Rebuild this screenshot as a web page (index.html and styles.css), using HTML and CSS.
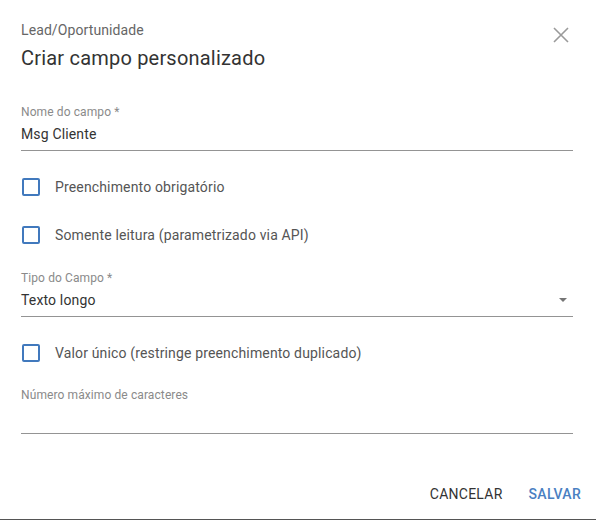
FILE: index.html
```html
<!DOCTYPE html>
<html lang="pt">
<head>
<meta charset="utf-8">
<link rel="stylesheet" href="styles.css">
</head>
<body>
<div class="dialog">
  <header class="head">
    <div class="titles">
      <div class="subtitle">Lead/Oportunidade</div>
      <h1 class="title">Criar campo personalizado</h1>
    </div>
    <button class="close" aria-label="Fechar">
      <svg width="16" height="16" viewBox="0 0 16 16"><path d="M1 1L15 15M15 1L1 15" stroke="#9a9a9a" stroke-width="1.6" fill="none"/></svg>
    </button>
  </header>

  <div class="body">
    <div class="field first">
      <div class="label">Nome do campo *</div>
      <div class="input">Msg Cliente</div>
    </div>

    <label class="check"><span class="box"></span><span class="ctext">Preenchimento obrigatório</span></label>
    <label class="check"><span class="box"></span><span class="ctext">Somente leitura (parametrizado via API)</span></label>

    <div class="field">
      <div class="label">Tipo do Campo *</div>
      <div class="input select">Texto longo<span class="arrow"></span></div>
    </div>

    <label class="check"><span class="box"></span><span class="ctext">Valor único (restringe preenchimento duplicado)</span></label>

    <div class="field last">
      <div class="label">Número máximo de caracteres</div>
      <div class="input"></div>
    </div>
  </div>

  <footer class="actions">
    <button class="btn cancel">CANCELAR</button>
    <button class="btn save">SALVAR</button>
  </footer>
</div>
</body>
</html>
```

FILE: styles.css
```css
* { box-sizing: border-box; }
html, body { margin: 0; padding: 0; background: #fff; }
body { font-family: Roboto, "Noto Sans", sans-serif; }

.dialog {
  width: 596px;
  height: 520px;
  background: #fff;
  border-bottom: 1px solid #555;
  display: flex;
  flex-direction: column;
  padding: 20px 23px 0 21px;
}

.head {
  display: flex;
  justify-content: space-between;
  align-items: flex-start;
}
.subtitle {
  font-size: 14px;
  line-height: 20px;
  color: #666;
  letter-spacing: 0.1px;
}
.title {
  margin: 4px 0 0;
  font-size: 20px;
  line-height: 28px;
  font-weight: 400;
  color: #333;
  letter-spacing: 0.2px;
}
.close {
  border: 0;
  background: none;
  padding: 0;
  margin: 7px 4px 0 0;
  width: 16px;
  height: 16px;
  display: flex;
}

.body {
  display: flex;
  flex-direction: column;
}

.field {
  display: flex;
  flex-direction: column;
  margin-top: 11px;
}
.field.first { margin-top: 32px; }
.field.last { margin-top: 10px; }
.label {
  font-size: 12px;
  line-height: 16px;
  color: #8a8a8a;
  letter-spacing: 0.1px;
}
.input {
  margin-top: 4px;
  min-height: 27px;
  font-size: 14px;
  line-height: 20px;
  color: #333;
  padding-bottom: 6px;
  border-bottom: 1px solid #949494;
  position: relative;
  letter-spacing: 0.15px;
}
.arrow {
  position: absolute;
  right: 6px;
  top: 8px;
  width: 0;
  height: 0;
  border-left: 4.5px solid transparent;
  border-right: 4.5px solid transparent;
  border-top: 4.5px solid #757575;
}

.check {
  display: flex;
  align-items: center;
  height: 48px;
  margin-top: 12px;
}
.check + .check { margin-top: 0; }
.box {
  width: 18px;
  height: 18px;
  margin-left: 1px;
  border: 2px solid #4179bd;
  border-radius: 2px;
  flex: none;
}
.ctext {
  margin-left: 15px;
  font-size: 14px;
  line-height: 20px;
  color: #555;
  letter-spacing: 0.15px;
}

.actions {
  margin-top: auto;
  display: flex;
  justify-content: flex-end;
  align-items: center;
  gap: 10px;
  height: 50px;
  margin-right: -16px;
}
.btn {
  border: 0;
  background: none;
  font-family: Roboto, "Noto Sans", sans-serif;
  font-size: 14px;
  font-weight: 500;
  letter-spacing: 0.3px;
  padding: 8px 8px;
  line-height: 16px;
}
.cancel { color: #333; font-weight: 400; letter-spacing: 0.25px; }
.save { color: #4a80c2; }
```
